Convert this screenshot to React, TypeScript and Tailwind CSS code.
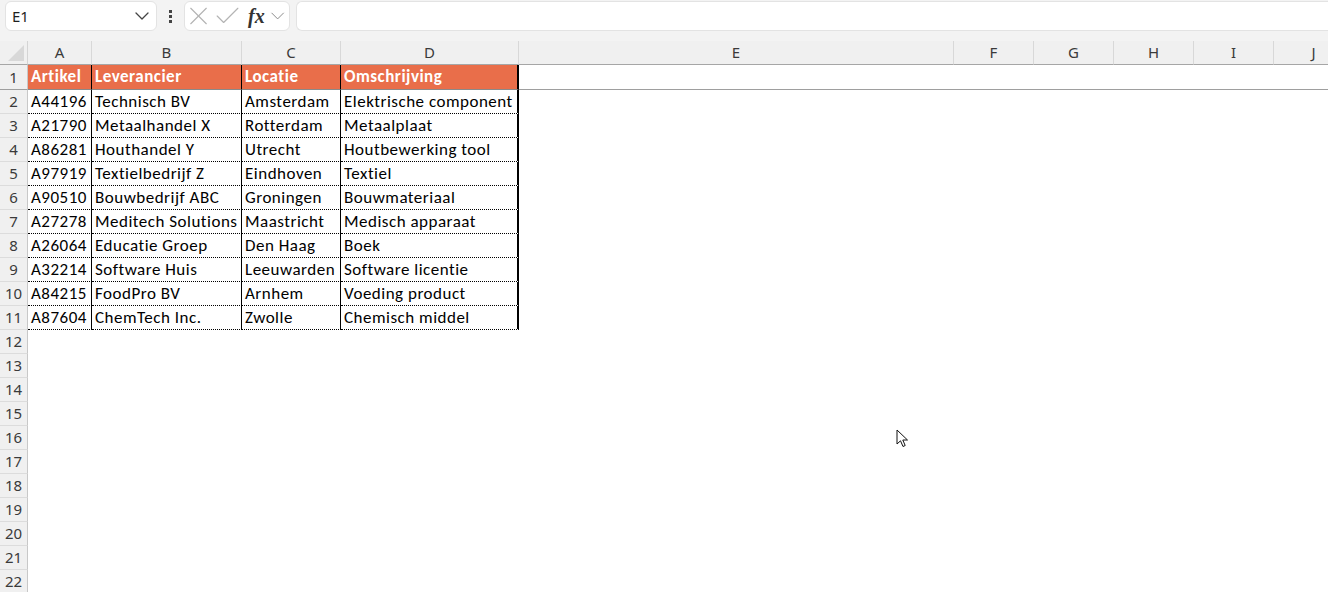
import React from 'react'
import { ChevronDown, X, Check } from 'lucide-react'

const rows = [
  ['A44196', 'Technisch BV', 'Amsterdam', 'Elektrische component'],
  ['A21790', 'Metaalhandel X', 'Rotterdam', 'Metaalplaat'],
  ['A86281', 'Houthandel Y', 'Utrecht', 'Houtbewerking tool'],
  ['A97919', 'Textielbedrijf Z', 'Eindhoven', 'Textiel'],
  ['A90510', 'Bouwbedrijf ABC', 'Groningen', 'Bouwmateriaal'],
  ['A27278', 'Meditech Solutions', 'Maastricht', 'Medisch apparaat'],
  ['A26064', 'Educatie Groep', 'Den Haag', 'Boek'],
  ['A32214', 'Software Huis', 'Leeuwarden', 'Software licentie'],
  ['A84215', 'FoodPro BV', 'Arnhem', 'Voeding product'],
  ['A87604', 'ChemTech Inc.', 'Zwolle', 'Chemisch middel'],
]

const headers = ['Artikel', 'Leverancier', 'Locatie', 'Omschrijving']
const letters = ['A', 'B', 'C', 'D', 'E', 'F', 'G', 'H', 'I', 'J']

const uiFont = "font-['Segoe_UI','Noto_Sans',sans-serif]"
const cellFont = "font-['Carlito','Lato',sans-serif] text-[17px] tracking-[0.5px]"

function RowHeader({ n, tall }: { n: number; tall?: boolean }) {
  return (
    <div
      className={`${tall ? 'h-[25px]' : 'h-[24px]'} bg-[#f0f0f0] border-r border-b border-r-[#c8c8c8] ${
        tall ? 'border-b-[#9e9e9e]' : 'border-b-[#dcdcdc]'
      } flex items-center justify-center text-[15px] text-[#3a3a3a] ${uiFont}`}
    >
      {n}
    </div>
  )
}

export default function App() {
  return (
    <div className="w-[1328px] h-[592px] overflow-hidden bg-white relative">
      {/* toolbar */}
      <div className="h-[41px] bg-[#f3f3f3] flex items-start pt-[1px] pl-[5px]">
        <div className="w-[152px] h-[30px] bg-white rounded-md border border-[#e3e3e3] flex items-center justify-between pl-[6px] pr-[2px]">
          <span className={`text-[15px] text-[#1f1f1f] ${uiFont}`}>E1</span>
          <ChevronDown size={24} strokeWidth={1.3} className="text-[#444]" />
        </div>
        <div className="w-[27px] h-[30px] flex flex-col items-center justify-center gap-[2px]">
          <span className="w-[3px] h-[3px] bg-[#444]" />
          <span className="w-[3px] h-[3px] bg-[#444]" />
          <span className="w-[3px] h-[3px] bg-[#444]" />
        </div>
        <div className="w-[106px] h-[30px] bg-white rounded-md border border-[#e3e3e3] flex items-center">
          <X size={32} strokeWidth={0.9} className="text-[#b4b4b4] -ml-[2px]" />
          <Check size={32} strokeWidth={0.9} className="text-[#b4b4b4] -ml-[2px]" />
          <span className="ml-[5px] text-[20px] italic font-bold text-[#333] font-['Liberation_Serif',serif] leading-none">
            fx
          </span>
          <ChevronDown size={24} strokeWidth={1} className="text-[#888] ml-[1px]" />
        </div>
        <div className="ml-[6px] flex-1 h-[30px] bg-white rounded-l-md border border-[#e3e3e3] border-r-0" />
      </div>

      {/* sheet */}
      <div className="grid grid-cols-[28px_64px_150px_99px_178px_435px_80px_80px_80px_80px_80px] w-[1354px]">
        {/* column headers */}
        <div className="h-[24px] bg-[#f0f0f0] border-r border-b border-r-[#d4d4d4] border-b-[#a6a6a6] relative">
          <svg width="16" height="16" viewBox="0 0 16 16" className="absolute right-[3px] bottom-[3px]">
            <polygon points="16,0 16,16 0,16" fill="#d8d8d8" />
          </svg>
        </div>
        {letters.map((l) => (
          <div
            key={l}
            className={`h-[24px] bg-[#f0f0f0] border-r border-b border-r-[#d8d8d8] border-b-[#a6a6a6] flex items-center justify-center text-[15px] text-[#3a3a3a] ${uiFont}`}
          >
            {l}
          </div>
        ))}

        {/* row 1 */}
        <RowHeader n={1} tall />
        {headers.map((h, i) => (
          <div
            key={h}
            className={`h-[25px] bg-[#e96e4a] border-b border-b-[#8a8a8a] ${
              i === 3 ? 'border-r-2' : 'border-r'
            } border-r-black flex items-center pl-[3px] font-bold text-white ${cellFont} whitespace-nowrap`}
          >
            {h}
          </div>
        ))}
        {letters.slice(4).map((l) => (
          <div key={l} className="h-[25px] border-b border-b-[#9e9e9e]" />
        ))}

        {/* data rows */}
        {rows.map((r, ri) => (
          <React.Fragment key={r[0]}>
            <RowHeader n={ri + 2} />
            {r.map((v, i) => (
              <div
                key={i}
                className={`h-[24px] border-b border-dotted border-b-black ${
                  i === 3 ? 'border-r-2' : 'border-r'
                } border-r-black flex items-center pl-[3px] text-black ${cellFont} whitespace-nowrap overflow-hidden`}
                style={{ borderRightStyle: 'solid' }}
              >
                {v}
              </div>
            ))}
            {letters.slice(4).map((l) => (
              <div key={l} className="h-[24px]" />
            ))}
          </React.Fragment>
        ))}

        {/* empty rows */}
        {Array.from({ length: 11 }, (_, k) => (
          <React.Fragment key={k}>
            <RowHeader n={k + 12} />
            {letters.map((l) => (
              <div key={l} className="h-[24px]" />
            ))}
          </React.Fragment>
        ))}
      </div>

      {/* mouse cursor */}
      <svg width="14" height="20" viewBox="0 0 14 20" className="absolute left-[896px] top-[429px]">
        <path
          d="M1 1 L1 15 L4.5 11.8 L7 17.5 L9.2 16.5 L6.8 11 L11.5 11 Z"
          fill="white"
          stroke="#111"
          strokeWidth="1"
          strokeLinejoin="round"
        />
      </svg>
    </div>
  )
}
